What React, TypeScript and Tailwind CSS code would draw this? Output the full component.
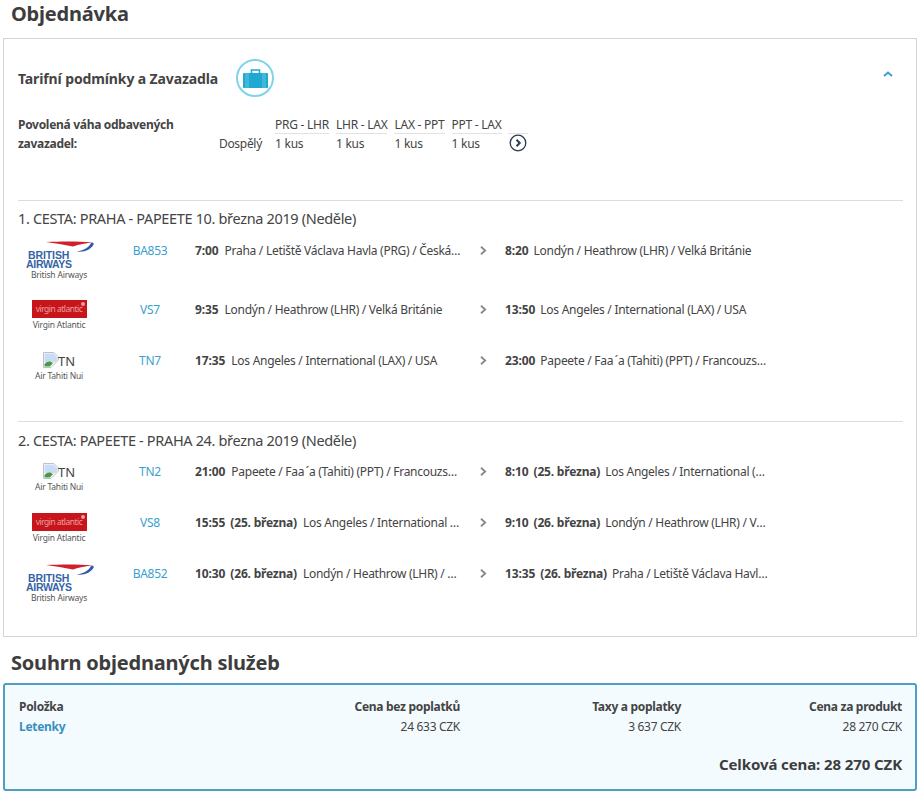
const font = "font-['Noto_Sans','Liberation_Sans',sans-serif]";

type Airline = 'ba' | 'vs' | 'tn';

interface Flight {
  airline: Airline;
  no: string;
  depTime: string;
  depDate?: string;
  dep: string;
  arrTime: string;
  arrDate?: string;
  arr: string;
}

const papeete = 'Papeete / Faa\u2009´a (Tahiti) (PPT) / Francouzská Polynésie';

const outbound: Flight[] = [
  { airline: 'ba', no: 'BA853', depTime: '7:00', dep: 'Praha / Letiště Václava Havla (PRG) / Česká republika', arrTime: '8:20', arr: 'Londýn / Heathrow (LHR) / Velká Británie' },
  { airline: 'vs', no: 'VS7', depTime: '9:35', dep: 'Londýn / Heathrow (LHR) / Velká Británie', arrTime: '13:50', arr: 'Los Angeles / International (LAX) / USA' },
  { airline: 'tn', no: 'TN7', depTime: '17:35', dep: 'Los Angeles / International (LAX) / USA', arrTime: '23:00', arr: papeete },
];

const inbound: Flight[] = [
  { airline: 'tn', no: 'TN2', depTime: '21:00', dep: papeete, arrTime: '8:10', arrDate: '(25. března)', arr: 'Los Angeles / International (LAX) / USA' },
  { airline: 'vs', no: 'VS8', depTime: '15:55', depDate: '(25. března)', dep: 'Los Angeles / International (LAX) / USA', arrTime: '9:10', arrDate: '(26. března)', arr: 'Londýn / Heathrow (LHR) / Velká Británie' },
  { airline: 'ba', no: 'BA852', depTime: '10:30', depDate: '(26. března)', dep: 'Londýn / Heathrow (LHR) / Velká Británie', arrTime: '13:35', arrDate: '(26. března)', arr: 'Praha / Letiště Václava Havla (PRG) / Česká republika' },
];

const legs = ['PRG - LHR', 'LHR - LAX', 'LAX - PPT', 'PPT - LAX'];

function Logo({ airline }: { airline: Airline }) {
  if (airline === 'ba') {
    return (
      <div className="flex flex-col items-center w-[82px]">
        <div className="relative w-[82px] h-[29px]">
          <svg className="absolute left-[28px] top-0" width="48" height="13" viewBox="0 0 48 13">
            <path d="M0 1 C14 0.2 32 0.2 47 1.2 C40 2 33 3.4 27 5.4 C18 3.8 9 2.4 0 1 Z" fill="#d0202e" />
            <path d="M31 10.5 C38 9.5 43 6 45 2 C47 1.4 48 2 47.6 3.4 C45.5 8 38.5 11.5 31 10.5 Z" fill="#2a5ca8" />
          </svg>
          <div className="absolute left-[10px] top-[10px] font-['Liberation_Sans',sans-serif] font-bold text-[10.5px] leading-[9px] tracking-[-0.1px] text-[#3564a6]">
            BRITISH
          </div>
          <div className="absolute left-[8px] top-[19px] font-['Liberation_Sans',sans-serif] font-bold text-[10.5px] leading-[9px] tracking-[-0.3px] text-[#3564a6]">
            AIRWAYS
          </div>
        </div>
        <div className="text-[8.5px] leading-[10px] tracking-[-0.2px] text-[#555]">British Airways</div>
      </div>
    );
  }
  if (airline === 'vs') {
    return (
      <div className="flex flex-col items-center w-[82px]">
        <div className="relative w-[55px] h-[18px] bg-[#c8141b] flex items-center justify-center text-[8.5px] tracking-[-0.5px] text-[#eaa0a0] leading-none">
          virgin atlantic
          <span className="absolute right-[2px] top-[2px] w-[4px] h-[4px] rounded-full bg-[#eaa0a0]" />
        </div>
        <div className="mt-[1px] text-[8.5px] leading-[12px] tracking-[-0.2px] text-[#555]">Virgin Atlantic</div>
      </div>
    );
  }
  return (
    <div className="flex flex-col items-center w-[82px]">
      <div className="flex items-center h-[17px] text-[13px] text-[#444] leading-none">
        <svg width="16" height="16" viewBox="0 0 16 16">
          <path d="M0.5 0.5 H11 L15.5 5 V8 L8 15.5 H0.5 Z" fill="#fff" stroke="#b9c2cc" />
          <path d="M1.5 1.5 H10.5 L14.5 5.5 V8 L12 10.5 H1.5 Z" fill="#c9dcf3" />
          <path d="M1.5 14.5 V12 C4 9 7 8.5 10 11 L7 14.5 Z" fill="#4c9a3f" />
        </svg>
        <span className="-ml-[1px] mt-[4px]">TN</span>
      </div>
      <div className="mt-[2px] text-[8.5px] leading-[12px] tracking-[-0.2px] text-[#555]">Air Tahiti Nui</div>
    </div>
  );
}

function Chevron() {
  return (
    <svg width="7" height="9" viewBox="0 0 7 9" fill="none" stroke="#888" strokeWidth="1.8">
      <path d="M1 0.8 L5.2 4.5 L1 8.2" />
    </svg>
  );
}

function FlightRow({ flight, height }: { flight: Flight; height: string }) {
  return (
    <div className={`flex items-start ${height}`}>
      <Logo airline={flight.airline} />
      <div className="w-[100px] text-center text-[12px] leading-[20px] tracking-[-0.3px] text-[#3a9fd0]">
        {flight.no}
      </div>
      <div className="w-[267px] -ml-[5px] truncate text-[12px] leading-[20px] tracking-[-0.28px] text-[#444]">
        <b className="font-bold tracking-[-0.1px]">{flight.depTime}</b>
        {flight.depDate && <b className="ml-[5px] font-bold tracking-[-0.2px]">{flight.depDate}</b>}
        <span className="ml-[6px]">{flight.dep}</span>
      </div>
      <div className="w-[43px] h-[20px] flex items-center justify-center -mt-[1px]">
        <Chevron />
      </div>
      <div className="w-[265px] truncate text-[12px] leading-[20px] tracking-[-0.28px] text-[#444]">
        <b className="font-bold tracking-[-0.1px]">{flight.arrTime}</b>
        {flight.arrDate && <b className="ml-[5px] font-bold tracking-[-0.2px]">{flight.arrDate}</b>}
        <span className="ml-[5px]">{flight.arr}</span>
      </div>
    </div>
  );
}

function Summary({ label, value }: { label: string; value: string }) {
  return (
    <div className="w-[221px] text-right">
      <div className="text-[12px] leading-[20px] font-bold tracking-[-0.3px] text-[#444]">{label}</div>
      <div className="text-[12px] leading-[20px] tracking-[-0.3px] text-[#444]">{value}</div>
    </div>
  );
}

export default function App() {
  return (
    <div className={`w-[920px] h-[794px] bg-white overflow-hidden text-[#444] ${font}`}>
      <h1 className="pl-[11px] h-[38px] text-[20px] leading-[27px] font-bold tracking-[-0.2px] text-[#3d3d3d]">
        Objednávka
      </h1>
      <div className="mx-[3px] h-[599px] border border-[#d4d4d4] pl-[14px] pr-[13px]">
        <div className="flex items-center h-[38px] mt-[20px]">
          <div className="w-[218px] text-[14px] font-bold tracking-[-0.12px] text-[#444]">Tarifní podmínky a Zavazadla</div>
          <div className="w-[38px] h-[38px] rounded-full border-2 border-[#7fd3ea] flex items-center justify-center">
            <svg width="25" height="19" viewBox="0 0 25 19">
              <path d="M8.5 4 V1 H16.5 V4" fill="none" stroke="#1fa9d2" strokeWidth="1.6" />
              <rect x="0" y="4" width="25" height="15" rx="1" fill="#1fa9d2" />
              <path d="M3 4 V19 M5 4 V19 M20 4 V19 M22 4 V19" stroke="#a8e0f0" strokeWidth="0.5" />
            </svg>
          </div>
          <svg className="ml-auto mr-[10px] -mt-[8px]" width="10" height="6" viewBox="0 0 10 6" fill="none" stroke="#3a9fd0" strokeWidth="1.8">
            <path d="M1 5 L5 1.5 L9 5" />
          </svg>
        </div>

        <div className="flex items-start mt-[18px] h-[85px]">
          <div className="w-[166px] text-[12px] leading-[19px] font-bold tracking-[-0.3px] text-[#444]">
            Povolená váha odbavených zavazadel:
          </div>
          <div className="w-[78px] pt-[19px] text-right text-[12px] leading-[19px] tracking-[-0.3px]">Dospělý</div>
          <div className="flex ml-[13px] gap-[7px]">
            {legs.map((leg) => (
              <div key={leg} className="text-[12px] tracking-[-0.25px] whitespace-nowrap">
                <div className="leading-[19px] border-b border-[#e2e2e2] h-[19px]">{leg}</div>
                <div className="leading-[19px]">1 kus</div>
              </div>
            ))}
          </div>
          <div className="ml-[6px] w-[20px]">
            <div className="h-[19px] border-b border-[#e2e2e2]" />
            <svg className="ml-[1px]" width="18" height="18" viewBox="0 0 18 18" fill="none" stroke="#2b3a55">
              <circle cx="9" cy="9" r="7.8" strokeWidth="1.3" />
              <path d="M7.5 5.8 L10.7 9 L7.5 12.2" strokeWidth="2" />
            </svg>
          </div>
        </div>

        <section className="border-t border-[#dcdcdc] h-[221px]">
          <h2 className="pt-[7px] h-[40px] text-[14.5px] leading-[20px] tracking-[-0.34px] text-[#444]">
            1. CESTA: PRAHA - PAPEETE 10. března 2019 (Neděle)
          </h2>
          <FlightRow flight={outbound[0]} height="h-[59px]" />
          <FlightRow flight={outbound[1]} height="h-[51px]" />
          <FlightRow flight={outbound[2]} height="h-[51px]" />
        </section>

        <section className="border-t border-[#dcdcdc]">
          <h2 className="pt-[8px] h-[40px] text-[14.5px] leading-[20px] tracking-[-0.34px] text-[#444]">
            2. CESTA: PAPEETE - PRAHA 24. března 2019 (Neděle)
          </h2>
          <FlightRow flight={inbound[0]} height="h-[51px]" />
          <FlightRow flight={inbound[1]} height="h-[51px]" />
          <FlightRow flight={inbound[2]} height="h-[51px]" />
        </section>
      </div>

      <h2 className="pl-[11px] h-[46px] pt-[12px] text-[20px] leading-[28px] font-bold tracking-[-0.2px] text-[#3d3d3d]">
        Souhrn objednaných služeb
      </h2>
      <div className="mx-[3px] h-[108px] border-2 border-[#4f9ec4] rounded-[3px] bg-[#f3fbff] pl-[14px] pr-[13px] pt-[12px]">
        <div className="flex">
          <div className="w-[220px]">
            <div className="text-[12px] leading-[20px] font-bold tracking-[-0.3px]">Položka</div>
            <div className="text-[12px] leading-[20px] font-bold tracking-[-0.3px] text-[#3a8fc0]">Letenky</div>
          </div>
          <div className="flex-1 flex justify-end">
            <Summary label="Cena bez poplatků" value="24 633 CZK" />
            <Summary label="Taxy a poplatky" value="3 637 CZK" />
            <Summary label="Cena za produkt" value="28 270 CZK" />
          </div>
        </div>
        <div className="mt-[16px] text-right text-[15px] leading-[22px] font-bold tracking-[-0.1px] text-[#3d3d3d]">
          Celková cena: 28 270 CZK
        </div>
      </div>
    </div>
  );
}
